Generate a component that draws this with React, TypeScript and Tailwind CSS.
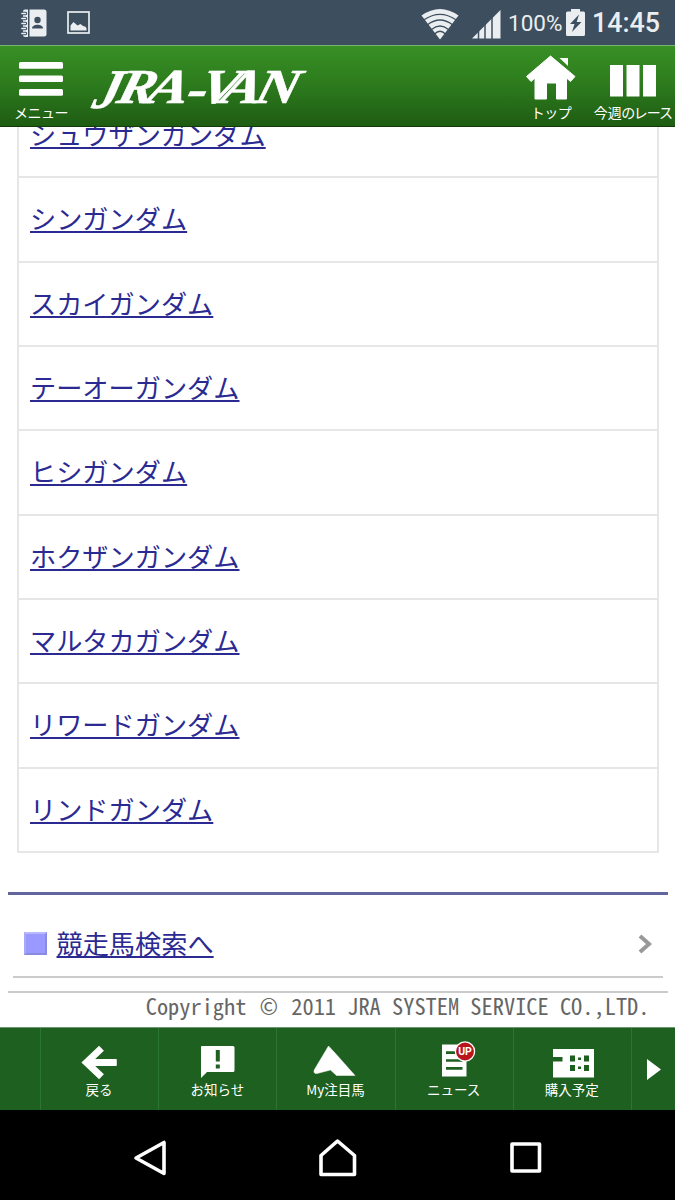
import type { ReactNode } from 'react'

const horses = [
	'シュウザンガンダム',
	'シンガンダム',
	'スカイガンダム',
	'テーオーガンダム',
	'ヒシガンダム',
	'ホクザンガンダム',
	'マルタカガンダム',
	'リワードガンダム',
	'リンドガンダム'
]

function StatusBar() {
	return (
		<div className="flex h-[45px] shrink-0 items-center bg-[#3d4f5e] font-[Roboto,sans-serif] text-[#ebeef1]">
			<svg width="26" height="28" viewBox="0 0 26 28" className="ml-[21px]">
				<path d="M2 2.5a2 2 0 0 1 2-2h3V28H4a2 2 0 0 1-2-2z" fill="#ebeef1" />
				<path d="M8.5.5H23a2.5 2.5 0 0 1 2.5 2.5v22a2.5 2.5 0 0 1-2.5 2.5H8.5z" fill="#ebeef1" />
				<circle cx="16.5" cy="11" r="3.2" fill="#3d4f5e" />
				<path d="M11 19.500c0-5 11-5 11 0z" fill="#3d4f5e" />
				<path
					d="M0 4.500h4.500M0 9.500h4.500M0 14.500h4.500M0 19.500h4.500M0 24.500h4.500"
					stroke="#3d4f5e"
					strokeWidth="3.4"
					strokeLinecap="round"
				/>
				<path
					d="M.8 4.500h3.700M.8 9.500h3.700M.8 14.500h3.700M.8 19.500h3.700M.8 24.500h3.700"
					stroke="#ebeef1"
					strokeWidth="1.3"
					strokeLinecap="round"
				/>
			</svg>
			<svg width="23" height="23" viewBox="0 0 23 23" className="ml-5">
				<rect x="1" y="1" width="21" height="21" fill="none" stroke="#ebeef1" strokeWidth="1.700" />
				<path d="M3.500 19.500v-5l3-3.500 4 3.500 3-1.500 2.500 2 2 .5 1.500 1.500v2.500z" fill="#ebeef1" />
			</svg>
			<svg width="38" height="31" viewBox="0 0 38 31" className="mt-[3px] ml-[331px]">
				<path d="M.5 6.500Q19-6.500 37.500 6.500L19 30.500z" fill="#ebeef1" />
				<path
					d="M3 10.800Q19-.2 35 10.800M6.500 15.800Q19 6.200 31.500 15.800M10.500 20.500Q19 13.500 27.500 20.500M13.500 25Q19 19.500 24.500 25"
					stroke="#3d4f5e"
					strokeWidth="1.300"
					fill="none"
				/>
			</svg>
			<svg width="29" height="29" viewBox="0 0 29 29" className="mt-[3px] ml-[13px]">
				<path d="M0 28.500L28.500 0v28.500z" fill="#ebeef1" />
				<path d="M6.500 0v29M13 0v29M20 0v29" stroke="#3d4f5e" strokeWidth="1.500" />
			</svg>
			<span className="mt-[2px] ml-[7px] w-[54px] text-[22.5px] leading-none">100%</span>
			<svg width="19" height="27" viewBox="0 0 19 27" className="ml-[4px]">
				<path d="M5 0h9v2.500h3.500A1.500 1.500 0 0 1 19 4v21.500a1.500 1.500 0 0 1-1.500 1.500h-16A1.500 1.500 0 0 1 0 25.500V4a1.500 1.500 0 0 1 1.500-1.500H5z" fill="#ebeef1" />
				<path d="M13 5.500L4 15h4.500L6 23l9.500-10h-4.800z" fill="#3d4f5e" />
			</svg>
			<span className="mt-[2px] ml-[7px] text-[26.8px] leading-none font-medium">14:45</span>
		</div>
	)
}

function Header() {
	return (
		<header className="flex h-[82px] shrink-0 border-t border-b border-t-[#78b56c] border-b-[#123c0b] bg-linear-to-b from-[#389025] via-[#2c7a1d] via-50% to-[#1f5c13] text-white">
			<div className="flex w-[82px] flex-col items-center pt-4">
				<svg width="44" height="34" viewBox="0 0 44 34">
					<rect width="44" height="6.700" rx="1.500" fill="#fff" />
					<rect y="13.600" width="44" height="6.500" rx="1.500" fill="#fff" />
					<rect y="27" width="44" height="6.700" rx="1.500" fill="#fff" />
				</svg>
				<span className="mt-[7px] text-[14px] leading-[18px] tracking-[-0.5px] whitespace-nowrap">メニュー</span>
			</div>
			<svg width="232" height="80" viewBox="82 46 232 80">
				<g
					transform="translate(0 103) skewX(-15)"
					fontFamily="Liberation Serif"
					fontWeight="700"
					fontStyle="italic"
					fill="#fff"
					stroke="#fff"
					strokeWidth="0.500"
				>
					<text x="92" y="5" fontSize="56" textLength="27" lengthAdjust="spacingAndGlyphs">J</text>
					<text x="115" y="0" fontSize="49" textLength="38" lengthAdjust="spacingAndGlyphs">R</text>
					<text x="145" y="0" fontSize="49" textLength="41" lengthAdjust="spacingAndGlyphs">A</text>
					<text x="185" y="3" fontSize="52" textLength="20" lengthAdjust="spacingAndGlyphs">-</text>
					<text x="197" y="0" fontSize="49" textLength="39" lengthAdjust="spacingAndGlyphs">V</text>
					<text x="219" y="0" fontSize="49" textLength="40" lengthAdjust="spacingAndGlyphs">A</text>
					<text x="253" y="0" fontSize="49" textLength="43" lengthAdjust="spacingAndGlyphs">N</text>
				</g>
			</svg>
			<div className="ml-auto flex w-[80px] flex-col items-center pt-[9px]">
				<svg width="50" height="45" viewBox="0 0 50 45">
					<path
						d="M24.500 1L49 21.500l-4.500 5-4-3.500v21H30.500V28h-10v16H9V23l-4 3.500-4.500-5z"
						fill="#fff"
						stroke="#fff"
						strokeLinejoin="round"
					/>
					<path d="M33.500 3H42v8z" fill="#fff" />
				</svg>
				<span className="mt-[3px] text-[14px] leading-[18px] tracking-[-0.5px] whitespace-nowrap">トップ</span>
			</div>
			<div className="flex w-[84px] flex-col items-center pt-[19px]">
				<svg width="46" height="32" viewBox="0 0 46 32">
					<path d="M0 0h13v31.500H0zM16.500 0h13v31.500h-13zM33 0h13v31.500H33z" fill="#fff" />
				</svg>
				<span className="mt-[6px] text-[14px] leading-[18px] tracking-[-0.2px] whitespace-nowrap [font-feature-settings:'palt']">
					今週のレース
				</span>
			</div>
		</header>
	)
}

function HorseList() {
	return (
		<ul className="mr-[16px] ml-[17px] -mt-[33px] border-x-2 border-[#e6e6e6]">
			{horses.map((horse) => (
				<li key={horse} className="flex h-[84.34px] items-center border-b-2 border-[#e6e6e6] pb-[2px] pl-[11px]">
					<a className="text-[26.2px] leading-none text-[#2b2a92] underline decoration-2 underline-offset-2 [text-decoration-skip-ink:none]">
						{horse}
					</a>
				</li>
			))}
		</ul>
	)
}

function SearchLink() {
	return (
		<div className="mx-[7.500px] mt-[39px] border-t-[3px] border-[#63659f] px-[5px]">
			<div className="flex h-[83px] items-center border-b-2 border-[#cbcbcb] pt-[16px] pl-[11px]">
				<span className="size-[23px] border-2 border-t-[#b9b9ff] border-r-[#8a8ae0] border-b-[#8a8ae0] border-l-[#a9a9f8] bg-[#9999ff]" />
				<a className="ml-[10px] text-[26.2px] leading-none text-[#2b2a92] underline decoration-2 underline-offset-2 [text-decoration-skip-ink:none]">
					競走馬検索へ
				</a>
				<svg width="14" height="20" viewBox="0 0 14 20" className="mt-[2px] mr-[11px] ml-auto">
					<path d="M2 2l9 8-9 8" fill="none" stroke="#999" strokeWidth="4" />
				</svg>
			</div>
		</div>
	)
}

function Copyright() {
	return (
		<div className="mx-[7.500px] mt-[13px] flex h-[36px] justify-end border-t-2 border-[#cbcbcb] pr-[18px] text-[22.4px] leading-[25px] whitespace-pre text-[#666] [font-feature-settings:'hwid']">
			<span>{'Copyright '}</span>
			<span className="w-[22.400px] text-center">©</span>
			<span>{' 2011 JRA SYSTEM SERVICE CO.,LTD.'}</span>
		</div>
	)
}

const tabs: { title: string; icon: ReactNode }[] = [
	{
		title: '戻る',
		icon: (
			<>
				<path d="M26.500 8.300L11.500 22.500l15 14.200" fill="none" stroke="#fff" strokeWidth="7" />
				<path d="M12 19h29a.8.8 0 0 1 .8.8v5.400a.8.8 0 0 1-.8.8H12z" fill="#fff" />
			</>
		)
	},
	{
		title: 'お知らせ',
		icon: (
			<>
				<path d="M9 6h31a1.500 1.500 0 0 1 1.500 1.500v23A1.500 1.500 0 0 1 40 32H14l-6 6V7a1 1 0 0 1 1-1z" fill="#fff" />
				<path d="M22.800 10h4v11.500h-4zM22.800 24.500h4v4h-4z" fill="#1d6020" />
			</>
		)
	},
	{
		title: 'My注目馬',
		icon: (
			<path
				d="M17.500 6l7 7.500L44 35.500H25.500l-6-5.500L6 33.500c-2.500.5-3.800-1.500-2.500-4z"
				fill="#fff"
				stroke="#fff"
				strokeWidth=".5"
			/>
		)
	},
	{
		title: 'ニュース',
		icon: (
			<>
				<path d="M12 4.500h24.500v32H12z" fill="#fff" />
				<path d="M16 12.600h9.500M16 20.500h16.500M16 28.400h16.500" stroke="#1d6020" strokeWidth="2.700" />
				<circle cx="35" cy="11.500" r="9.600" fill="#b8141c" stroke="#fff" strokeWidth="1.300" />
				<text x="35" y="15" fill="#fff" fontFamily="Roboto" fontSize="10.500" fontWeight="700" textAnchor="middle">
					UP
				</text>
			</>
		)
	},
	{
		title: '購入予定',
		icon: (
			<>
				<path d="M5 9h41v28.500H5V21.500h9.500V17H5z" fill="#fff" />
				<path
					d="M22 15.500h5v6h-5zM22 25h5v6h-5zM36 15.500h5v6h-5zM36 25h5v6h-5zM30 17.500h3v2.500h-3zM30 26.500h3v2.500h-3z"
					fill="#1d6020"
				/>
			</>
		)
	}
]

function TabBar() {
	return (
		<nav className="flex h-[83px] shrink-0 border-t border-[#6f9471] bg-[#1d6020] text-white">
			<div className="w-[41px] border-r border-[#2c7431]" />
			{tabs.map((tab) => (
				<div key={tab.title} className="flex w-[118.200px] flex-col items-center border-r border-[#2c7431] pt-[12px] pr-px">
					<svg width="48" height="40" viewBox="0 0 48 40">
						{tab.icon}
					</svg>
					<span className="-mt-px text-[13.5px] leading-5 whitespace-nowrap">{tab.title}</span>
				</div>
			))}
			<div className="flex flex-1 items-center justify-center pl-px">
				<svg width="14" height="21" viewBox="0 0 14 21">
					<path d="M0 0l14 10.500L0 21z" fill="#fff" />
				</svg>
			</div>
		</nav>
	)
}

function SystemNav() {
	return (
		<div className="flex h-[90px] shrink-0 items-center bg-black pt-[6px]">
			<svg width="34" height="36" viewBox="0 0 34 36" className="ml-[133px]">
				<path d="M31 2.500v31L3 18z" fill="none" stroke="#fff" strokeWidth="3.600" strokeLinejoin="round" />
			</svg>
			<svg width="38" height="38" viewBox="0 0 38 38" className="ml-[152px]">
				<path d="M2 35.500v-19L18.500 2 35.500 16.500v19z" fill="none" stroke="#fff" strokeWidth="3.600" strokeLinejoin="round" />
			</svg>
			<svg width="32" height="32" viewBox="0 0 32 32" className="ml-[153px]">
				<rect x="2" y="2" width="27.500" height="27" fill="none" stroke="#fff" strokeWidth="3.600" strokeLinejoin="round" />
			</svg>
		</div>
	)
}

export default function App() {
	return (
		<div className="flex h-[1200px] w-[675px] flex-col overflow-hidden bg-white font-['Noto_Sans_CJK_JP',sans-serif]">
			<StatusBar />
			<Header />
			<main className="h-[900px] shrink-0 overflow-hidden">
				<HorseList />
				<SearchLink />
				<Copyright />
			</main>
			<TabBar />
			<SystemNav />
		</div>
	)
}
